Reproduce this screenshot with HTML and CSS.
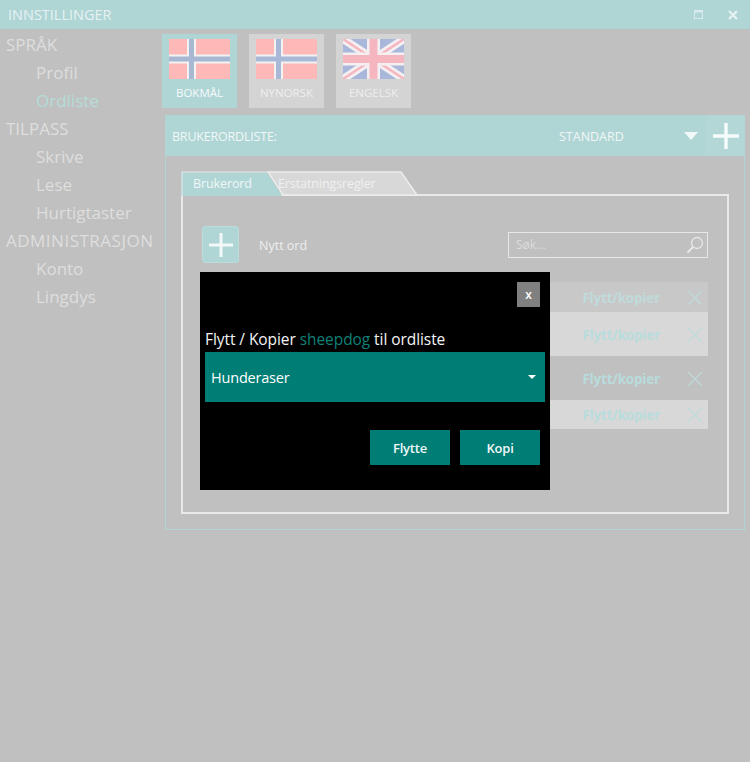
FILE: index.html
```html
<!DOCTYPE html>
<html lang="no">
<head>
<meta charset="utf-8">
<title>Innstillinger</title>
<link rel="stylesheet" href="styles.css">
</head>
<body>
<div class="app">
  <header class="titlebar">
    <span class="title">INNSTILLINGER</span>
    <div class="window-controls">
      <svg class="win-max" width="9" height="9" viewBox="0 0 9 9"><rect x="0.5" y="0.5" width="8" height="8" fill="none" stroke="#d8ecec"/><rect x="0" y="0" width="9" height="2.5" fill="#d8ecec"/></svg>
      <svg class="win-close" width="10" height="10" viewBox="0 0 10 10"><path d="M1 1L9 9M9 1L1 9" stroke="#e6f2f2" stroke-width="2.2"/></svg>
    </div>
  </header>
  <div class="main">
    <nav class="sidebar">
      <div class="nav-head">SPRÅK</div>
      <div class="nav-item">Profil</div>
      <div class="nav-item active">Ordliste</div>
      <div class="nav-head">TILPASS</div>
      <div class="nav-item">Skrive</div>
      <div class="nav-item">Lese</div>
      <div class="nav-item">Hurtigtaster</div>
      <div class="nav-head nav-head-long">ADMINISTRASJON</div>
      <div class="nav-item">Konto</div>
      <div class="nav-item">Lingdys</div>
    </nav>
    <section class="content">
      <div class="langs">
        <div class="lang selected">
          <svg class="flag" viewBox="0 0 61 40"><rect width="61" height="40" fill="#ffb8b8"/><path d="M22.5 0V40M0 20H61" stroke="#f2f2f2" stroke-width="9"/><path d="M22.5 0V40M0 20H61" stroke="#a9b8d2" stroke-width="5"/></svg>
          <span>BOKMÅL</span>
        </div>
        <div class="lang">
          <svg class="flag" viewBox="0 0 61 40"><rect width="61" height="40" fill="#ffb8b8"/><path d="M22.5 0V40M0 20H61" stroke="#f2f2f2" stroke-width="9"/><path d="M22.5 0V40M0 20H61" stroke="#a9b8d6" stroke-width="5"/></svg>
          <span>NYNORSK</span>
        </div>
        <div class="lang">
          <svg class="flag" viewBox="0 0 61 40"><rect width="61" height="40" fill="#a9b8da"/><path d="M0 0L61 40M61 0L0 40" stroke="#f4f0f2" stroke-width="8"/><path d="M0 0L61 40M61 0L0 40" stroke="#f6b6c0" stroke-width="2.5"/><path d="M30.5 0V40M0 20H61" stroke="#f4f0f2" stroke-width="13"/><path d="M30.5 0V40M0 20H61" stroke="#f6b6c0" stroke-width="8"/></svg>
          <span>ENGELSK</span>
        </div>
      </div>
      <div class="panel">
        <div class="panel-head">
          <span class="panel-label">BRUKERORDLISTE:</span>
          <span class="panel-value">STANDARD</span>
          <svg class="caret" width="14" height="8" viewBox="0 0 14 8"><path d="M0 0H14L7 8Z" fill="#f2f8f8"/></svg>
          <div class="head-add">
            <svg width="26" height="26" viewBox="0 0 26 26"><path d="M0 13H26M13 0V26" stroke="#f6fbfb" stroke-width="3.4"/></svg>
          </div>
        </div>
        <div class="panel-body">
          <div class="tabs">
            <div class="tab tab-on">
              <svg class="tab-shape" width="102" height="25" viewBox="0 0 102 25"><path d="M0 25V1H86L101 25Z" fill="#b0d5d5"/><path d="M1 25V1H86" fill="none" stroke="#e6e6e6"/></svg>
              <span class="tab-text">Brukerord</span>
            </div>
            <div class="tab tab-off">
              <svg class="tab-shape" width="152" height="25" viewBox="0 0 152 25"><path d="M1 1H134L150 24H16Z" fill="#d8d8d8" stroke="#ececec" stroke-width="1.5"/></svg>
              <span class="tab-text">Erstatningsregler</span>
            </div>
          </div>
          <div class="frame">
            <div class="toolbar">
              <div class="add-btn">
                <svg width="24" height="24" viewBox="0 0 24 24"><path d="M0 12H24M12 0V24" stroke="#f2f8f8" stroke-width="3"/></svg>
              </div>
              <span class="new-word">Nytt ord</span>
              <div class="search">
                <span>Søk...</span>
                <svg width="18" height="18" viewBox="0 0 18 18"><circle cx="11" cy="7" r="5.5" fill="none" stroke="#e8e8e8" stroke-width="1.3"/><path d="M7 11L1.5 16.5" stroke="#e8e8e8" stroke-width="2"/></svg>
              </div>
            </div>
            <div class="rows">
              <div class="row r1"><span class="move">Flytt/kopier</span><svg class="del" width="14" height="14" viewBox="0 0 14 14"><path d="M0 0L14 14M14 0L0 14"/></svg></div>
              <div class="row r2"><span class="move">Flytt/kopier</span><svg class="del" width="14" height="14" viewBox="0 0 14 14"><path d="M0 0L14 14M14 0L0 14"/></svg></div>
              <div class="row r3"><span class="move">Flytt/kopier</span><svg class="del" width="14" height="14" viewBox="0 0 14 14"><path d="M0 0L14 14M14 0L0 14"/></svg></div>
              <div class="row r4"><span class="move">Flytt/kopier</span><svg class="del" width="14" height="14" viewBox="0 0 14 14"><path d="M0 0L14 14M14 0L0 14"/></svg></div>
            </div>
          </div>
        </div>
      </div>
    </section>
  </div>
</div>
<div class="modal">
  <div class="modal-top"><button class="modal-close">x</button></div>
  <p class="modal-text">Flytt / Kopier <span class="word">sheepdog</span> til ordliste</p>
  <div class="select">
    <span>Hunderaser</span>
    <svg width="8" height="4" viewBox="0 0 8 4"><path d="M0 0H8L4 4Z" fill="#fff"/></svg>
  </div>
  <div class="modal-actions">
    <button class="action">Flytte</button>
    <button class="action">Kopi</button>
  </div>
</div>
</body>
</html>
```
FILE: styles.css
```css
* { box-sizing: border-box; }
html, body { margin: 0; height: 100%; overflow: hidden; }
body {
  background: #c0c0c0;
  font-family: "Open Sans", "Noto Sans", sans-serif;
  color: #e4e4e4;
  position: relative;
}
.app { height: 762px; display: flex; flex-direction: column; }

.titlebar {
  height: 29px;
  flex: none;
  background: #b0d5d5;
  display: flex;
  align-items: center;
  justify-content: space-between;
  padding: 0 12px 0 8px;
}
.title { font-size: 14.5px; color: #e6f2f2; }
.window-controls { display: flex; align-items: center; gap: 25px; }
.window-controls svg { display: block; }

.main { flex: 1; display: flex; }
.sidebar { width: 162px; flex: none; padding-top: 2px; }
.nav-head, .nav-item { height: 28px; line-height: 28px; font-size: 17px; color: #dedede; white-space: nowrap; }
.nav-head { padding-left: 6px; }
.nav-head-long { letter-spacing: 0.5px; }
.nav-item { padding-left: 36px; }
.nav-item.active { color: #b4dcd8; }

.content { flex: 1; display: flex; flex-direction: column; padding-top: 5px; }
.langs { display: flex; gap: 12px; height: 74px; }
.lang {
  width: 75px;
  height: 74px;
  background: #d4d4d4;
  display: flex;
  flex-direction: column;
  align-items: center;
  padding-top: 5px;
}
.lang.selected { background: #b0d5d5; color: #f4f9f9; }
.flag { width: 61px; height: 40px; display: block; }
.lang span { margin-top: 6px; font-size: 11.5px; line-height: 15px; color: #eeeeee; }
.lang.selected span { color: #f6fbfb; }

.panel {
  margin: 7px 5px 0 3px;
  height: 415px;
  border: 1px solid #b0d5d5;
  border-top: 0;
  display: flex;
  flex-direction: column;
}
.panel-head {
  height: 41px;
  margin-left: -1px;
  margin-right: -1px;
  background: #b0d5d5;
  display: flex;
  align-items: center;
  padding-left: 7px;
  font-size: 12.5px;
  color: #f0f7f7;
}
.panel-label { width: 387px; letter-spacing: -0.2px; padding-top: 2px; }
.panel-value { width: 125px; padding-top: 2px; }
.head-add {
  margin-left: 8px;
  width: 39px;
  height: 41px;
  background: #b3d7d7;
  display: flex;
  align-items: center;
  justify-content: center;
  padding-top: 1px;
}
.head-add svg { display: block; }

.panel-body { flex: 1; padding: 15px; display: flex; flex-direction: column; }
.tabs { height: 25px; display: flex; flex: none; margin-bottom: -2px; position: relative; }
.tab { position: relative; height: 25px; font-size: 12.5px; line-height: 25px; letter-spacing: -0.1px; z-index: 1; }
.tab-shape { position: absolute; left: 0; top: 0; display: block; }
.tab-text { position: relative; white-space: nowrap; }
.tab-on { width: 86px; padding-left: 12px; color: #f0f7f7; }
.tab-off { width: 152px; padding-left: 11px; color: #f0f0f0; }

.frame {
  flex: 1;
  border: 2px solid #e9e9e9;
  padding: 30px 19px 0 19px;
  display: flex;
  flex-direction: column;
}
.toolbar { display: flex; align-items: center; height: 37px; }
.add-btn {
  width: 37px;
  height: 37px;
  background: #b0d5d5;
  border: 1px solid #bcdcdc;
  border-radius: 3px;
  display: flex;
  align-items: center;
  justify-content: center;
}
.add-btn svg { display: block; }
.new-word { margin-left: 20px; padding-top: 2px; font-size: 12.5px; color: #eeeeee; width: 249px; }
.search {
  width: 200px;
  height: 26px;
  border: 1px solid #e8e8e8;
  display: flex;
  align-items: center;
  justify-content: space-between;
  padding: 0 3px 0 7px;
  font-size: 12px;
  color: #dcdcdc;
}
.rows { margin-top: 19px; }
.row { display: flex; align-items: center; justify-content: flex-end; padding: 1px 6px 0 0; }
.r1 { height: 30px; background: #c8c8c8; }
.r2 { height: 44px; background: #d8d8d8; }
.r3 { height: 44px; }
.r4 { height: 29px; background: #d8d8d8; }
.move { font-size: 13.5px; font-weight: 700; color: #b8dcdc; margin-right: 28px; letter-spacing: -0.2px; }
.r1 .move { color: #c0dbdb; }
.del { display: block; flex: none; stroke: #bcdcdc; stroke-width: 1.2; }

.modal {
  position: absolute;
  left: 200px;
  top: 272px;
  width: 350px;
  height: 218px;
  background: #000;
  padding: 10px 5px 0;
  display: flex;
  flex-direction: column;
}
.modal-top { display: flex; justify-content: flex-end; padding-right: 5px; height: 25px; }
.modal-close {
  width: 23px;
  height: 25px;
  border: 0;
  padding: 0;
  background: #808080;
  color: #fff;
  font: 600 12px "Open Sans", sans-serif;
}
.modal-text { margin: 21px 0 0; height: 24px; font-size: 15.5px; line-height: 22px; color: #f4f4f4; letter-spacing: -0.07px; }
.word { color: #0e8078; }
.select {
  height: 50px;
  background: #007d75;
  display: flex;
  align-items: center;
  justify-content: space-between;
  padding: 0 9px 0 6px;
  font-size: 14.5px;
  letter-spacing: -0.2px;
  color: #fff;
}
.select svg { display: block; }
.modal-actions { display: flex; justify-content: flex-end; gap: 10px; padding: 28px 5px 0 0; }
.action {
  width: 80px;
  height: 35px;
  border: 0;
  background: #007d75;
  color: #f0f8f8;
  font: 600 13px "Open Sans", sans-serif;
  letter-spacing: -0.2px;
}
```
